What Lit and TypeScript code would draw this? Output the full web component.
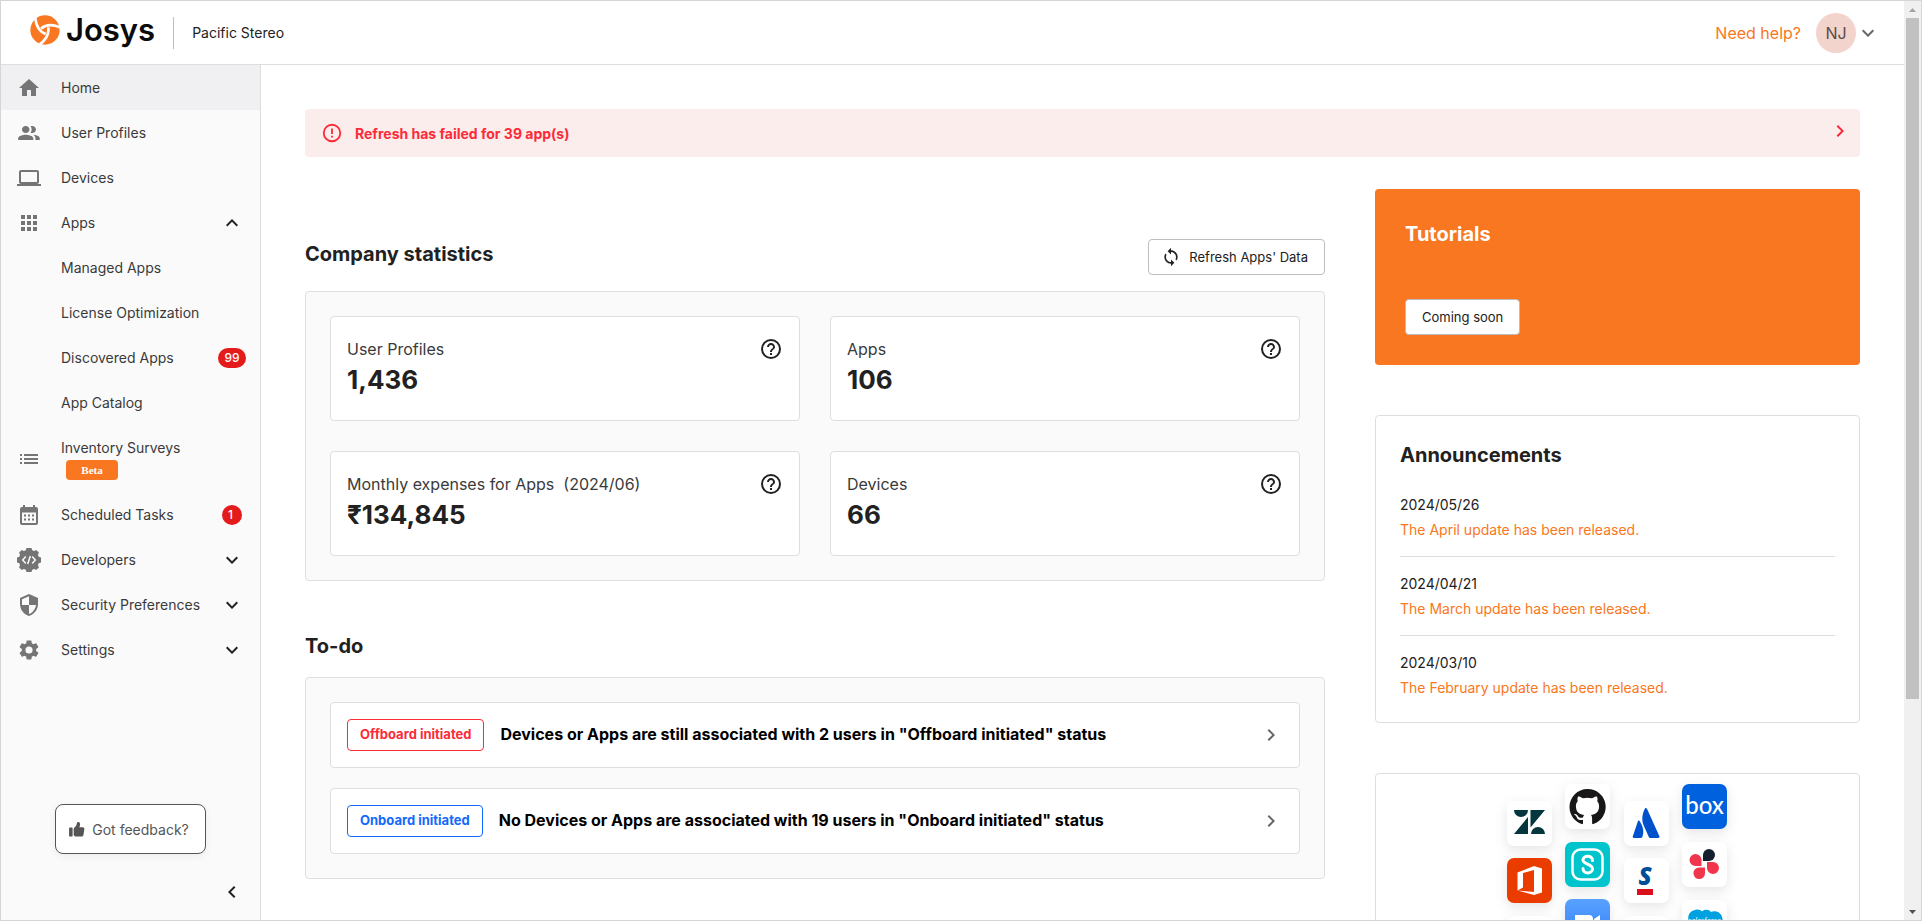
import { LitElement, html, css, svg, nothing } from "lit";
import { customElement } from "lit/decorators.js";
import { classMap } from "lit/directives/class-map.js";

const ICONS: Record<string, unknown> = {
  home: svg`<path d="M10 20v-6h4v6h5v-8h3L12 3 2 12h3v8z"/>`,
  people: svg`<path d="M9 13.75c-2.34 0-7 1.17-7 3.5V19h14v-1.75c0-2.33-4.66-3.5-7-3.5zM9 12c1.93 0 3.5-1.57 3.5-3.5S10.93 5 9 5 5.500 6.570 5.500 8.500 7.070 12 9 12zm7.040 1.810c1.160.840 1.960 1.960 1.960 3.440V19h4v-1.750c0-2.020-3.500-3.170-5.960-3.440zM15 12c1.930 0 3.500-1.570 3.500-3.500S16.930 5 15 5c-.540 0-1.040.130-1.500.350.630.890 1 1.980 1 3.150s-.370 2.260-1 3.150c.460.220.960.350 1.500.350z" transform="translate(-1 0) scale(1.08 1)"/>`,
  laptop: svg`<path d="M20 18c1.100 0 1.990-.900 1.990-2L22 6c0-1.100-.900-2-2-2H4c-1.100 0-2 .900-2 2v10c0 1.100.900 2 2 2H0v2h24v-2h-4zM4 6h16v10H4V6z"/>`,
  apps: svg`<path d="M4 8h4V4H4v4zm6 12h4v-4h-4v4zm-6 0h4v-4H4v4zm0-6h4v-4H4v4zm6 0h4v-4h-4v4zm6-10v4h4V4h-4zm-6 4h4V4h-4v4zm6 6h4v-4h-4v4zm0 6h4v-4h-4v4z"/>`,
  list: svg`<path d="M3 13h2v-2H3v2zm0 4h2v-2H3v2zm0-8h2V7H3v2zm4 4h14v-2H7v2zm0 4h14v-2H7v2zM7 7v2h14V7H7z"/>`,
  calendar: svg`<path d="M19 4h-1V2h-2v2H8V2H6v2H5a2 2 0 0 0-2 2v14c0 1.100.900 2 2 2h14a2 2 0 0 0 2-2V6a2 2 0 0 0-2-2zm0 16H5V9.500h14zM7 11.500h2v2H7zm4 0h2v2h-2zm4 0h2v2h-2zM7 15.500h2v2H7zm4 0h2v2h-2zm4 0h2v2h-2z"/>`,
  developer: svg`<path d="M9.500 0h5l.700 2.300 2 .800L19.300 2 22 4.700l-1.100 2.100.800 2 2.300.700v5l-2.300.700-.800 2 1.100 2.100-2.700 2.700-2.100-1.100-2 .800-.700 2.300h-5l-.700-2.300-2-.800L4.700 22 2 19.300l1.100-2.100-.800-2L0 14.500v-5l2.300-.700.800-2L2 4.700 4.700 2l2.100 1.100 2-.800z"/><path d="M8.800 8.500 5.700 12l3.100 3.500M15.200 8.500l3.100 3.500-3.100 3.500M13.300 8l-2.600 8" fill="none" stroke="#fafafa" stroke-width="1.500"/>`,
  shield: svg`<path d="M12 1 3 5v6c0 5.550 3.840 10.740 9 12 5.160-1.260 9-6.450 9-12V5l-9-4zm0 10.990h7c-.530 4.120-3.280 7.790-7 8.940V12H5V6.300l7-3.110v8.800z"/>`,
  gear: svg`<path d="M19.140 12.940c.040-.300.060-.610.060-.940s-.020-.640-.070-.940l2.030-1.580a.490.490 0 0 0 .120-.610l-1.920-3.320a.488.488 0 0 0-.590-.220l-2.390.960c-.500-.380-1.030-.700-1.620-.940l-.360-2.540a.484.484 0 0 0-.480-.410h-3.840c-.240 0-.430.170-.470.410l-.360 2.540c-.590.240-1.130.570-1.620.940l-2.390-.960a.477.477 0 0 0-.590.220L2.740 8.870c-.120.210-.080.470.120.610l2.030 1.580c-.050.300-.090.630-.090.940s.020.640.070.940l-2.030 1.580a.490.490 0 0 0-.120.610l1.920 3.320c.120.220.370.290.590.220l2.390-.960c.500.380 1.030.700 1.620.940l.360 2.540c.050.240.240.410.480.410h3.840c.240 0 .440-.170.470-.410l.360-2.540c.590-.240 1.130-.560 1.620-.940l2.390.960c.220.080.470 0 .590-.220l1.920-3.320a.477.477 0 0 0-.120-.610zM12 15.600A3.600 3.600 0 1 1 12 8.400a3.600 3.600 0 0 1 0 7.200z"/>`,
  up: svg`<path d="M12 8l-6 6 1.410 1.410L12 10.830l4.590 4.580L18 14z"/>`,
  down: svg`<path d="M16.590 8.590 12 13.170 7.410 8.590 6 10l6 6 6-6z"/>`,
  left: svg`<path d="M15.410 7.410 14 6l-6 6 6 6 1.410-1.410L10.830 12z"/>`,
  right: svg`<path d="M10 6 8.590 7.410 13.170 12l-4.580 4.590L10 18l6-6z"/>`,
  help: svg`<path d="M11 18h2v-2h-2v2zm1-16a10 10 0 1 0 0 20 10 10 0 0 0 0-20zm0 18a8 8 0 1 1 0-16 8 8 0 0 1 0 16zm0-14c-2.210 0-4 1.790-4 4h2c0-1.100.900-2 2-2s2 .900 2 2c0 2-3 1.750-3 5h2c0-2.250 3-2.500 3-5 0-2.210-1.790-4-4-4z"/>`,
  alert: svg`<path d="M11 15h2v2h-2zm0-8h2v6h-2zm1-5a10 10 0 1 0 0 20 10 10 0 0 0 0-20zm0 18a8 8 0 1 1 0-16 8 8 0 0 1 0 16z"/>`,
  sync: svg`<path d="M12 4V1L8 5l4 4V6c3.310 0 6 2.690 6 6 0 1.010-.250 1.970-.700 2.800l1.460 1.460A7.930 7.930 0 0 0 20 12c0-4.420-3.580-8-8-8zm0 14c-3.310 0-6-2.690-6-6 0-1.010.250-1.970.700-2.800L5.240 7.740A7.930 7.930 0 0 0 4 12c0 4.420 3.580 8 8 8v3l4-4-4-4v3z"/>`,
  thumb: svg`<path d="M1.500 10.500c0-.800.600-1.300 1.300-1.300h2.400c.700 0 1.300.500 1.300 1.300v10.200c0 .700-.600 1.300-1.300 1.300H2.800c-.700 0-1.300-.600-1.300-1.300zM8 11.300c0-.900.400-1.600 1.100-2.200 2.400-2 3-3.400 3.400-5.700.300-1.500 1.200-2.200 2.300-2 1.700.300 2.500 2.100 2.200 4.200-.200 1.200-.600 2.200-1.100 3.200h5c1.400 0 2.400 1.100 2.200 2.500l-1.200 8.200c-.300 1.500-1.300 2.500-2.900 2.500h-6.600c-1.400 0-2.700-.400-3.700-1.200-.500-.400-.700-.900-.700-1.500z"/>`,
};

const icon = (name: string, size = 24) =>
  html`<svg class="icon" width=${size} height=${size} viewBox="0 0 24 24" fill="currentColor" aria-hidden="true">${ICONS[name]}</svg>`;

interface NavEntry {
  label: string;
  icon?: string;
  active?: boolean;
  sub?: boolean;
  badge?: number;
  toggle?: "up" | "down";
  beta?: boolean;
}

const NAV: NavEntry[] = [
  { label: "Home", icon: "home", active: true },
  { label: "User Profiles", icon: "people" },
  { label: "Devices", icon: "laptop" },
  { label: "Apps", icon: "apps", toggle: "up" },
  { label: "Managed Apps", sub: true },
  { label: "License Optimization", sub: true },
  { label: "Discovered Apps", sub: true, badge: 99 },
  { label: "App Catalog", sub: true },
  { label: "Inventory Surveys", icon: "list", beta: true },
  { label: "Scheduled Tasks", icon: "calendar", badge: 1 },
  { label: "Developers", icon: "developer", toggle: "down" },
  { label: "Security Preferences", icon: "shield", toggle: "down" },
  { label: "Settings", icon: "gear", toggle: "down" },
];

const STATS = [
  { label: "User Profiles", value: "1,436" },
  { label: "Apps", value: "106" },
  { label: "Monthly expenses for Apps\u00a0 (2024/06)", value: "₹134,845" },
  { label: "Devices", value: "66" },
];

const TODOS = [
  { tag: "Offboard initiated", kind: "off", text: 'Devices or Apps are still associated with 2 users in "Offboard initiated" status' },
  { tag: "Onboard initiated", kind: "on", text: 'No Devices or Apps are associated with 19 users in "Onboard initiated" status' },
];

const NEWS = [
  { date: "2024/05/26", title: "The April update has been released." },
  { date: "2024/04/21", title: "The March update has been released." },
  { date: "2024/03/10", title: "The February update has been released." },
];

const shared = css`
  :host { box-sizing: border-box; font-family: Inter, "Liberation Sans", sans-serif; color: #212121; }
  *, *::before, *::after { box-sizing: border-box; }
  h2, p, ul { margin: 0; padding: 0; }
  ul { list-style: none; }
  a { color: inherit; text-decoration: none; }
  button { font: inherit; color: inherit; background: none; border: 0; padding: 0; cursor: pointer; }
  .icon { display: block; flex: none; }
`;

@customElement("josys-header")
class JosysHeader extends LitElement {
  static styles = [shared, css`
    :host { display: flex; align-items: center; height: 64px; flex: none; padding: 0 24px 0 29px; border-bottom: 1px solid #dedede; background: #fff; }
    .brand { display: flex; align-items: center; gap: 6px; height: 58px; align-self: flex-start; color: #0b0b0b; font-size: 31px; line-height: 58px; font-weight: 600; }
    .tenant { margin-left: 18px; padding-left: 18px; border-left: 1px solid #bdbdbd; line-height: 32px; font-size: 14px; }
    .help { margin-left: auto; font-size: 16px; color: #f97721; }
    .user { display: flex; align-items: center; margin-left: 15px; color: #666; }
    .avatar { width: 40px; height: 40px; border-radius: 50%; background: #f2d4cc; color: #5c4a48; font-size: 16px; line-height: 40px; text-align: center; }
  `];
  render() {
    const cut = "M-29-37C-27-18-20 4 2 12";
    return html`
      <a class="brand" href="#home" aria-label="Josys home">
        <svg class="icon" width="30" height="30" viewBox="-44 -44 88 88" aria-hidden="true">
          <circle r="43" fill="#f97721"/>
          <g fill="none" stroke="#fff" stroke-width="8">
            <path d=${cut}/><path d=${cut} transform="rotate(120)"/><path d=${cut} transform="rotate(240)"/>
          </g>
        </svg>
        <span>Josys</span>
      </a>
      <span class="tenant">Pacific Stereo</span>
      <a class="help" href="#help">Need help?</a>
      <button class="user" aria-label="Account menu"><span class="avatar">NJ</span>${icon("down")}</button>
    `;
  }
}

@customElement("josys-sidebar")
class JosysSidebar extends LitElement {
  static styles = [shared, css`
    :host { display: flex; flex-direction: column; width: 260px; flex: none; background: #fafafa; border-right: 1px solid #dedede; }
    .item { display: flex; align-items: center; width: 100%; min-height: 45px; padding: 0 16px; gap: 20px; color: #757575; text-align: left; }
    .active { background: #f0f0f2; }
    .sub { padding-left: 60px; }
    .label { flex: 1; min-width: 0; font-size: 14px; line-height: 20px; color: #3a3a3a; white-space: nowrap; }
    .end { display: flex; justify-content: center; width: 24px; color: #212121; }
    .badge { flex: none; min-width: 20px; padding: 0 6px; border-radius: 10px; background: #e41b1b; color: #fff; font-size: 12px; line-height: 20px; font-weight: 500; }
    .beta-item { min-height: 67px; padding-bottom: 4px; padding-top: 4px; }
    .beta { display: block; width: 52px; height: 20px; margin: 2px 0 0 5px; border-radius: 4px; background: #f97721; color: #fff; font: bold 11px/20px "Liberation Serif", serif; text-align: center; }
    .foot { display: flex; flex-direction: column; align-items: center; margin-top: auto; gap: 26px; padding-bottom: 16px; }
    .feedback { display: flex; align-items: center; gap: 7px; height: 50px; padding: 0 16px 0 12px; border: 1px solid #555; border-radius: 8px; background: #fff; color: #555; font-size: 14px; box-shadow: 0 2px 8px rgba(0, 0, 0, 0.06); }
    .collapse { align-self: flex-end; margin-right: 16px; color: #212121; }
  `];
  private entry(n: NavEntry) {
    const cls = classMap({ item: true, active: !!n.active, sub: !!n.sub, "beta-item": !!n.beta });
    const body = html`
      ${n.icon ? icon(n.icon) : nothing}
      <span class="label">${n.label}${n.beta ? html`<span class="beta">Beta</span>` : nothing}</span>
      ${n.badge ? html`<span class="end"><span class="badge">${n.badge}</span></span>` : nothing}
      ${n.toggle ? html`<span class="end">${icon(n.toggle)}</span>` : nothing}`;
    return n.toggle
      ? html`<li><button class=${cls} aria-expanded=${n.toggle === "up"}>${body}</button></li>`
      : html`<li><a class=${cls} href="#">${body}</a></li>`;
  }
  render() {
    return html`
      <nav aria-label="Main"><ul>${NAV.map((n) => this.entry(n))}</ul></nav>
      <div class="foot">
        <button class="feedback">${icon("thumb", 17)}Got feedback?</button>
        <button class="collapse" aria-label="Collapse menu">${icon("left")}</button>
      </div>
    `;
  }
}

@customElement("app-mosaic")
class AppMosaic extends LitElement {
  static styles = [shared, css`
    :host { display: block; }
    .art { display: block; width: 260px; height: 240px; margin: 0 auto; }
    .tile { fill: #fff; filter: drop-shadow(0 4px 6px rgba(0, 0, 0, 0.1)); }
    .box { font: 500 24px Lato, sans-serif; fill: #fff; }
    .slant { font: italic 800 24px "Open Sans", sans-serif; fill: #004e98; }
    .cloud { font: italic 8px Lato, sans-serif; fill: #fff; }
  `];
  private tile(x: number, y: number, fill: string, art: unknown) {
    return svg`<g transform="translate(${x} ${y})"><rect class="tile" width="45" height="45" rx="7" style="fill:${fill}"/>${art}</g>`;
  }
  render() {
    return html`
      <svg class="art" viewBox="-2 0 260 240" role="img" aria-label="Integrated apps">
        <defs><linearGradient id="sky" x2="0" y2="1"><stop stop-color="#5aa2ff"/><stop offset="1" stop-color="#2d7cf6"/></linearGradient></defs>
        ${this.tile(17, 27, "#fff", svg`<g fill="#03363d"><path d="M21 16v17H7zM7 9h14a7 7 0 0 1-14 0zM23.500 9H38L23.500 26.500zM24 33a7 7 0 0 1 14 0z"/></g>`)}
        ${this.tile(75, 10, "#fff", svg`<path fill="#191717" d="M22.500 5C12.600 5 4.500 13 4.500 23c0 8 5.200 14.700 12.300 17.100.900.200 1.200-.400 1.200-.900v-3.300c-5 1.100-6.100-2.200-6.100-2.200-.800-2-2-2.600-2-2.600-1.600-1.100.100-1.100.100-1.100 1.800.1 2.800 1.900 2.800 1.900 1.600 2.700 4.200 2 5.200 1.500.200-1.200.600-2 1.100-2.400-4-.500-8.200-2-8.200-8.900 0-2 .700-3.600 1.900-4.800-.200-.500-.800-2.300.200-4.800 0 0 1.500-.500 5 1.800a17 17 0 0 1 9 0c3.500-2.300 5-1.800 5-1.800 1 2.500.400 4.300.200 4.800 1.200 1.300 1.900 2.900 1.900 4.800 0 6.900-4.200 8.400-8.200 8.900.700.600 1.200 1.700 1.200 3.300v4.900c0 .500.300 1.100 1.200.900A18 18 0 0 0 22.500 5z"/>`)}
        ${this.tile(134, 27, "#fff", svg`<path fill="#0052cc" d="M14 20c.600-.700 1.300-.600 1.700.200 3.400 5 4.800 11 2.500 16-.300.500-.600.800-1.200.800H10c-1.200 0-1.600-.900-1.100-1.900zM20.700 8c.500-1.300 1.800-1.300 2.400 0L35.300 35c.5 1.200 0 2-1.200 2h-7.700c-.800 0-1.200-.4-1.600-1.100L19.500 24c-2-5-1.300-11 1.200-16z"/>`)}
        ${this.tile(192, 10, "#0061de", svg`<text class="box" x="22.500" y="30" text-anchor="middle">box</text>`)}
        ${this.tile(17, 84, "#eb3c00", svg`<path fill="#fff" fill-rule="evenodd" d="M10.500 14.500 27 8l8 2.500v24L27 37l-16.500-4.500zM27 12l-11 3v14.500l-5.500 3L27 34z"/>`)}
        ${this.tile(75, 68, "#00c4cc", svg`<rect x="7.500" y="7.500" width="30" height="30" rx="8" fill="none" stroke="#fff" stroke-width="2.500"/><path fill="none" stroke="#fff" stroke-width="3" stroke-linecap="round" d="M27.500 18.500c0-6-9.500-5.500-9.500-.500 0 4.500 9.500 4 9.500 9s-9.500 5.500-9.500-.5"/>`)}
        ${this.tile(134, 84, "#fff", svg`<text class="slant" x="21" y="27" text-anchor="middle">S</text><path fill="#d90f1c" d="M13 31h16v6H13z"/>`)}
        ${this.tile(192, 68, "#fff", svg`<path fill="#14202f" d="M21 19v-6a6 6 0 1 1 6 6z"/><path fill="#f0364c" d="M19.500 20v-2a6 6 0 1 0-6 6h6zM19 25.500h-2a5.800 5.800 0 1 0 6 6v-6zM25 20v6a6 6 0 1 0 6-6z"/>`)}
        ${this.tile(17, 142, "#fff", nothing)}
        ${this.tile(75, 125, "url(#sky)", svg`<path fill="#fff" d="M10 16h14q4 0 4 4v10H14q-4 0-4-4zM29 20l6-4v14l-6-4z"/>`)}
        ${this.tile(134, 142, "#fff", nothing)}
        ${this.tile(192, 126, "#fff", svg`<path fill="#00a1e0" d="M7 22c-2-5 0-11 6-12 3-1 6 0 7 1.500 2-2.500 7-2.500 9 .5 4-2 11 0 11.500 7S35 31 31 29c-3 6-10 5-12 2-4 2-9 0-9-4-2-1-3-3-3-5z"/><text class="cloud" x="22.500" y="23" text-anchor="middle">salesforce</text>`)}
      </svg>
    `;
  }
}

@customElement("josys-dashboard")
class JosysDashboard extends LitElement {
  static styles = [shared, css`
    :host { display: block; flex: 1; min-width: 0; overflow: hidden; padding: 44px 44px 0; background: #fff; }
    .banner { display: flex; align-items: center; height: 48px; padding: 0 8px 0 16px; gap: 12px; border-radius: 4px; background: #fceded; color: #fb2b37; font-size: 14px; font-weight: 700; }
    .banner .go { display: flex; align-items: center; height: 44px; align-self: flex-start; margin-left: auto; }
    .columns { display: grid; grid-template-columns: minmax(0, 1fr) 485px; gap: 50px; margin-top: 32px; }
    .left, .right { display: flex; flex-direction: column; gap: 50px; }
    .left { padding-top: 50px; }
    h2 { font-size: 20px; line-height: 30px; font-weight: 700; }
    .head { display: flex; justify-content: space-between; align-items: flex-start; margin-bottom: 16px; }
    .btn { display: flex; align-items: center; gap: 8px; height: 36px; padding: 0 16px; border: 1px solid #bdbdbd; border-radius: 4px; background: #fff; color: #212121; font-size: 13px; }
    .refresh { padding-left: 12px; }
    .panel { padding: 24px; border: 1px solid #dedede; border-radius: 4px; background: #fafafa; }
    .card { display: flex; border: 1px solid #dedede; border-radius: 4px; background: #fff; }
    .stats { display: grid; grid-template-columns: 1fr 1fr; gap: 30px; }
    .stat { justify-content: space-between; align-items: flex-start; height: 105px; padding: 20px 16px; }
    .stat p { font-size: 16px; line-height: 24px; color: #3a3a3a; }
    .stat strong { display: block; font-size: 26px; line-height: 38px; font-weight: 700; }
    .todos { display: grid; gap: 20px; }
    .todo { align-items: center; height: 66px; padding: 0 16px; gap: 16px; color: #000; font-size: 16px; font-weight: 700; }
    .todo .message { padding-bottom: 3px; }
    .tag { height: 32px; padding: 0 12px; border: 1px solid; border-radius: 4px; font-size: 13px; line-height: 29px; }
    .off { color: #fb2b37; }
    .on { color: #1468fb; }
    .todo .icon { margin-left: auto; color: #666; }
    .tutorials { padding: 30px; border-radius: 4px; background: #f97721; color: #fff; }
    .tutorials .btn { margin-top: 50px; }
    .news { padding: 24px 24px 22px; border: 1px solid #dedede; border-radius: 4px; }
    .news ul { margin-top: 22px; font-size: 14px; line-height: 25px; }
    .news li + li { margin-top: 14px; padding-top: 14px; border-top: 1px solid #dedede; }
    .news a { color: #f97721; }
    .promo { border: 1px solid #dedede; border-radius: 4px; }
  `];
  render() {
    return html`
      <a class="banner" href="#refresh">
        ${icon("alert", 22)}<span>Refresh has failed for 39 app(s)</span><span class="go">${icon("right")}</span>
      </a>
      <div class="columns">
        <div class="left">
          <section>
            <div class="head"><h2>Company statistics</h2><button class="btn refresh">${icon("sync", 20)}Refresh Apps' Data</button></div>
            <div class="panel stats">
              ${STATS.map((s) => html`<div class="card stat"><div><p>${s.label}</p><strong>${s.value}</strong></div><button aria-label="About ${s.label}">${icon("help")}</button></div>`)}
            </div>
          </section>
          <section>
            <div class="head"><h2>To-do</h2></div>
            <div class="panel todos">
              ${TODOS.map((t) => html`<a class="card todo" href="#todo"><span class="tag ${t.kind}">${t.tag}</span><span class="message">${t.text}</span>${icon("right")}</a>`)}
            </div>
          </section>
        </div>
        <div class="right">
          <section class="tutorials"><h2>Tutorials</h2><button class="btn">Coming soon</button></section>
          <section class="news">
            <h2>Announcements</h2>
            <ul>${NEWS.map((n) => html`<li><div>${n.date}</div><a href="#news">${n.title}</a></li>`)}</ul>
          </section>
          <section class="promo"><app-mosaic></app-mosaic></section>
        </div>
      </div>
    `;
  }
}

@customElement("app-root")
class AppRoot extends LitElement {
  static styles = [shared, css`
    :host { display: flex; height: 100vh; overflow: hidden; border: 1px solid #d5d5d5; background: #fff; }
    .page { display: flex; flex-direction: column; flex: 1; min-width: 0; }
    .body { display: flex; flex: 1; min-height: 0; }
    .scroll { display: grid; grid-template-rows: 17px minmax(0, 1fr) 17px; width: 17px; flex: none; padding: 0 2px; background: #f0f0f0; justify-items: center; align-items: center; }
    .track { width: 100%; height: 100%; }
    .thumb { height: 77%; background: #c1c1c1; }
  `];
  render() {
    return html`
      <div class="page">
        <josys-header></josys-header>
        <div class="body"><josys-sidebar></josys-sidebar><josys-dashboard></josys-dashboard></div>
      </div>
      <div class="scroll" aria-hidden="true">
        <svg class="icon" width="7" height="4" viewBox="0 0 7 4"><path d="M0 4 3.500 0 7 4z" fill="#a3a3a3"/></svg>
        <div class="track"><div class="thumb"></div></div>
        <svg class="icon" width="7" height="4" viewBox="0 0 7 4"><path d="M0 0h7L3.500 4z" fill="#505050"/></svg>
      </div>
    `;
  }
}
